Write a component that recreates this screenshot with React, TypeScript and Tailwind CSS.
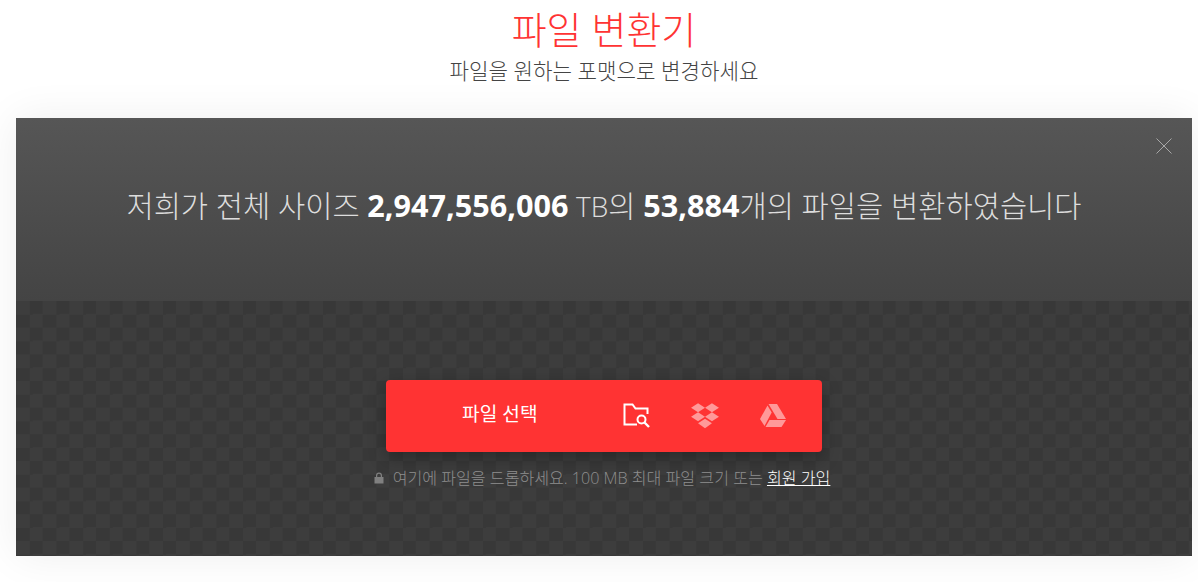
const font = { fontFamily: '"Open Sans","Noto Sans CJK KR",sans-serif' };

function FolderSearch() {
  return (
    <svg width="28" height="26" viewBox="0 0 28 26" fill="none" stroke="#fff" strokeWidth="2">
      <path d="M14 21.5H1.5V1.5H9.5L12.5 5.5H24.5V11" />
      <circle cx="18.5" cy="16.5" r="4" />
      <path d="M21.5 19.5L26 24" strokeWidth="2.4" />
    </svg>
  );
}

function Dropbox() {
  return (
    <svg width="30" height="26" viewBox="0 0 28 24" fill="#fff" fillOpacity="0.5">
      <path d="M7.5 0L14 4.2 7.5 8.4 1 4.2z" />
      <path d="M20.5 0L27 4.2 20.5 8.4 14 4.2z" />
      <path d="M7.5 8.6L14 12.8 7.5 17 1 12.8z" />
      <path d="M20.5 8.6L27 12.8 20.5 17 14 12.8z" />
      <path d="M14 14.5L20.5 18.7 14 23.5 7.5 18.7z" />
    </svg>
  );
}

function Drive() {
  return (
    <svg width="26" height="23" viewBox="0 0 26 23" fill="#fff" fillOpacity="0.5">
      <path d="M8.5 0H17L26 15H17.5z" />
      <path d="M7.5 1.5L11.7 8.5 4.5 22 0 15z" />
      <path d="M9.5 16H26L21.5 23H5.5z" />
    </svg>
  );
}

export default function App() {
  return (
    <div className="w-[1198px] h-[582px] bg-white overflow-hidden" style={font}>
      <div className="ml-[16px] w-[1176px] h-[118px] flex flex-col items-center">
        <h1 className="text-[38px] leading-[50px] mt-[4px] text-[#ff3333] font-light">파일 변환기</h1>
        <p className="text-[21.2px] leading-[28px] mt-[3px] text-[#444444] font-light">파일을 원하는 포맷으로 변경하세요</p>
      </div>
      <div className="mx-[16px] w-[1176px] h-[438px] flex flex-col shadow-[0_0_40px_rgba(0,0,0,0.07)]">
        <div className="relative h-[183px] bg-gradient-to-b from-[#565656] to-[#444444] flex justify-center pt-[69px]">
          <p className="text-[29.6px] leading-[36px] text-[#dddddd] font-light whitespace-nowrap">
            저희가 전체 사이즈 <b className="font-bold text-[30.6px] text-white">2,947,556,006</b> <span className="text-[28px]">TB</span>의 <b className="font-bold text-[30.6px] text-white">53,884</b>개의 파일을 변환하였습니다
          </p>
          <svg className="absolute right-[20px] top-[20px]" width="16" height="16" viewBox="0 0 16 16" stroke="#a8a8a8" strokeWidth="1">
            <path d="M0.5 0.5L15.5 15.5M15.5 0.5L0.5 15.5" />
          </svg>
        </div>
        <div className="flex-1 flex flex-col items-center pt-[79px] bg-[#3a3a3a] bg-[conic-gradient(#383838_25%,#3d3d3d_0_50%,#383838_0_75%,#3d3d3d_0)] bg-[length:26.67px_26.67px]">
          <div className="w-[436px] h-[72px] rounded-[4px] bg-[#ff3333] shadow-[0_6px_18px_rgba(0,0,0,0.3)] flex items-center">
            <span className="ml-[76px] w-[161px] text-[19.2px] leading-[26px] mb-[4px] text-white">파일 선택</span>
            <FolderSearch />
            <span className="ml-[39px] flex"><Dropbox /></span>
            <span className="ml-[41px] flex -translate-x-[1px] -translate-y-[1px]"><Drive /></span>
          </div>
          <p className="mt-[15px] -ml-[4px] text-[16.1px] leading-[22px] text-[#8e8e8e] font-light whitespace-nowrap flex items-center">
            <svg className="mr-[9px]" width="10" height="12" viewBox="0 0 10 12" fill="#808080">
              <path d="M2 5V3.5a3 3 0 0 1 6 0V5h1.5v6.5h-9V5zM3.2 5h3.6V3.5a1.8 1.8 0 0 0-3.6 0z" />
            </svg>
            <span>여기에 파일을 드롭하세요. 100 MB 최대 파일 크기 또는 <a className="text-white underline">회원 가입</a></span>
          </p>
        </div>
      </div>
    </div>
  );
}
